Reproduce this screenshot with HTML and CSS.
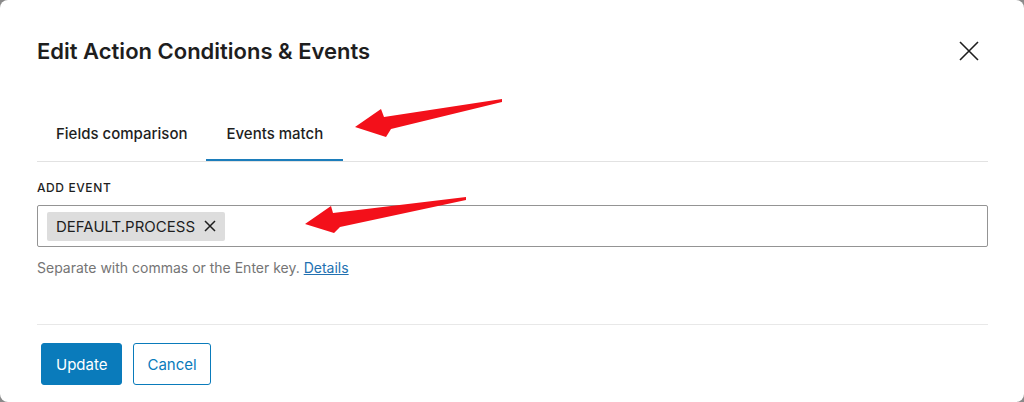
FILE: index.html
```html
<!DOCTYPE html>
<html lang="en">
<head>
    <meta charset="UTF-8">
    <meta name="viewport" content="width=device-width, initial-scale=1.0">
    <title>Edit Action Conditions &amp; Events</title>
    <link rel="stylesheet" href="styles.css">
</head>
<body>
    <div class="modal">
        <div class="modal-header">
            <h1>Edit Action Conditions &amp; Events</h1>
            <button class="close-btn" aria-label="Close">
                <svg width="20" height="20" viewBox="0 0 20 20">
                    <path d="M1 1 L19 19 M19 1 L1 19" stroke="#1e1e1e" stroke-width="1.6" fill="none"/>
                </svg>
            </button>
        </div>

        <div class="tabs">
            <button class="tab">Fields comparison</button>
            <button class="tab active">Events match</button>
        </div>

        <div class="field">
            <label class="field-label">Add event</label>
            <div class="token-input">
                <span class="token">
                    DEFAULT.PROCESS
                    <svg class="token-remove" width="12" height="12" viewBox="0 0 12 12">
                        <path d="M1 1 L11 11 M11 1 L1 11" stroke="#1e1e1e" stroke-width="1.5" fill="none"/>
                    </svg>
                </span>
            </div>
            <p class="help">Separate with commas or the Enter key. <a href="#">Details</a></p>
        </div>

        <div class="modal-footer">
            <button class="btn btn-primary">Update</button>
            <button class="btn btn-secondary">Cancel</button>
        </div>

        <!-- annotation arrows -->
        <svg class="annotations" width="1024" height="402" viewBox="0 0 1024 402">
            <polygon fill="#f3101a" points="355,127 381,109 384,117 502,99 502,102 391,129 386,137"/>
            <polygon fill="#f3101a" points="305,224 331,206 333,213 466,197 466,200 340,227 334,233"/>
        </svg>
    </div>
</body>
</html>
```

FILE: styles.css
```css
body {
    margin: 0;
    padding: 0;
    background-color: #8a8a8a;
    font-family: Inter, "Noto Sans", sans-serif;
    color: #1e1e1e;
}

.modal {
    position: relative;
    width: 1024px;
    height: 402px;
    box-sizing: border-box;
    background-color: white;
    border-radius: 8px;
    padding: 0 36px 0 37px;
    overflow: hidden;
}

.modal-header {
    display: flex;
    align-items: center;
    justify-content: space-between;
    padding-top: 35px;
    height: 32px;
}

.modal-header h1 {
    margin: 0;
    font-size: 22px;
    font-weight: 600;
    line-height: 32px;
}

.close-btn {
    background: none;
    border: none;
    padding: 0;
    margin-right: 9px;
    width: 20px;
    height: 20px;
    cursor: pointer;
}

.tabs {
    display: flex;
    margin-top: 46px;
    border-bottom: 1px solid #e2e2e2;
}

.tab {
    background: none;
    border: none;
    font-family: inherit;
    font-size: 15px;
    font-weight: 500;
    color: #1e1e1e;
    line-height: 20px;
    padding: 11px 19px 17px 19px;
    cursor: pointer;
}

.tab.active {
    padding-left: 20px;
    padding-right: 20px;
    box-shadow: inset 0 -2px 0 #1c7dbb;
}

.field {
    padding-top: 18px;
}

.field-label {
    display: block;
    font-size: 12px;
    font-weight: 500;
    text-transform: uppercase;
    line-height: 16px;
    letter-spacing: 0.6px;
    margin-bottom: 9px;
}

.token-input {
    display: flex;
    align-items: center;
    height: 42px;
    box-sizing: border-box;
    border: 1px solid #949494;
    border-radius: 2px;
    padding: 0 9px;
}

.token {
    display: inline-flex;
    align-items: center;
    gap: 9px;
    height: 29px;
    padding: 0 9px;
    background-color: #ddd;
    border-radius: 2px;
    font-size: 15px;
    color: #1e1e1e;
}

.help {
    margin: 12px 0 0;
    font-size: 14px;
    line-height: 18px;
    color: #757575;
}

.help a {
    color: #2271b1;
}

.modal-footer {
    margin-top: 47px;
    border-top: 1px solid #e8e8e8;
    padding: 18px 0 0 4px;
    display: flex;
    gap: 11px;
}

.btn {
    height: 42px;
    padding: 0 14px;
    font-family: inherit;
    font-size: 15px;
    border-radius: 3px;
    cursor: pointer;
}

.btn-primary {
    background-color: #0a7bbb;
    color: white;
    border: 1px solid #0a7bbb;
}

.btn-secondary {
    padding: 0 13px;
    background-color: white;
    color: #0a7bbb;
    border: 1px solid #0a7bbb;
}

.annotations {
    position: absolute;
    top: 0;
    left: 0;
    pointer-events: none;
}
```
